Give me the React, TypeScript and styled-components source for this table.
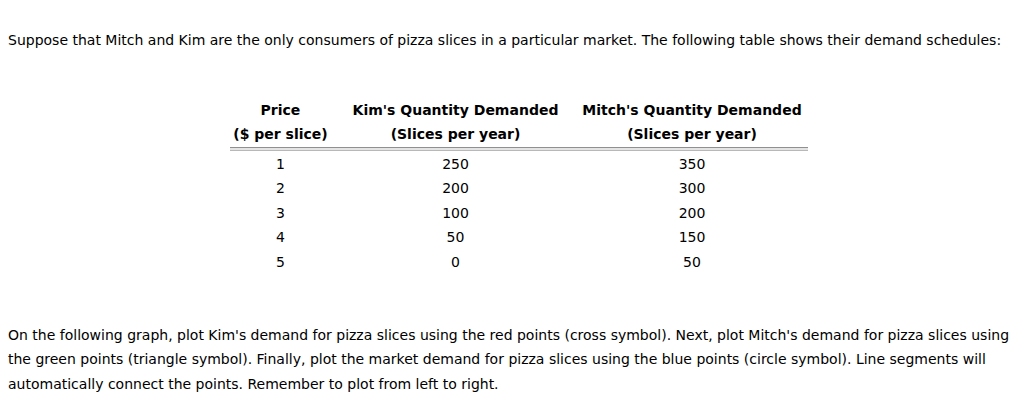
import React from "react";
import styled, { createGlobalStyle } from "styled-components";

const Global = createGlobalStyle`
  html, body { margin: 0; padding: 0; background: #fff; }
  body { font-family: "DejaVu Sans", Verdana, sans-serif; color: #000; }
`;

const Page = styled.div`
  padding: 28px 8px 0 8px;
  width: 1024px;
  box-sizing: border-box;
`;

const Line = styled.p`
  margin: 0;
  font-size: 14px;
  line-height: 24.5px;
  white-space: nowrap;
`;

const Table = styled.div`
  margin: 45px 0 0 222px;
  width: 578px;
`;

const Row = styled.div`
  display: grid;
  grid-template-columns: 101px 249px 224px;
  font-size: 14px;
  line-height: 24.5px;
  text-align: center;
`;

const HeadRow = styled(Row)`
  font-weight: bold;
`;

const Cell = styled.div`
  white-space: nowrap;
`;

const Rule = styled.div`
  height: 2px;
  border-top: 1px solid #909090;
  border-bottom: 1px solid #b8b8b8;
  background: #e4e4e4;
  margin: 0 0 1px 0;
`;

const Para2 = styled.div`
  margin-top: 48.5px;
`;

const data = [
  [1, 250, 350],
  [2, 200, 300],
  [3, 100, 200],
  [4, 50, 150],
  [5, 0, 50],
];

export default function App() {
  return (
    <>
      <Global />
      <Page>
        <Line>
          Suppose that Mitch and Kim are the only consumers of pizza slices in a particular market. The following table shows their demand schedules:
        </Line>
        <Table>
          <HeadRow>
            <Cell>Price</Cell>
            <Cell>Kim's Quantity Demanded</Cell>
            <Cell>Mitch's Quantity Demanded</Cell>
          </HeadRow>
          <HeadRow>
            <Cell>($ per slice)</Cell>
            <Cell>(Slices per year)</Cell>
            <Cell>(Slices per year)</Cell>
          </HeadRow>
          <Rule />
          {data.map((r) => (
            <Row key={r[0]}>
              <Cell>{r[0]}</Cell>
              <Cell>{r[1]}</Cell>
              <Cell>{r[2]}</Cell>
            </Row>
          ))}
        </Table>
        <Para2>
          <Line>On the following graph, plot Kim's demand for pizza slices using the red points (cross symbol). Next, plot Mitch's demand for pizza slices using</Line>
          <Line>the green points (triangle symbol). Finally, plot the market demand for pizza slices using the blue points (circle symbol). Line segments will</Line>
          <Line>automatically connect the points. Remember to plot from left to right.</Line>
        </Para2>
      </Page>
    </>
  );
}
